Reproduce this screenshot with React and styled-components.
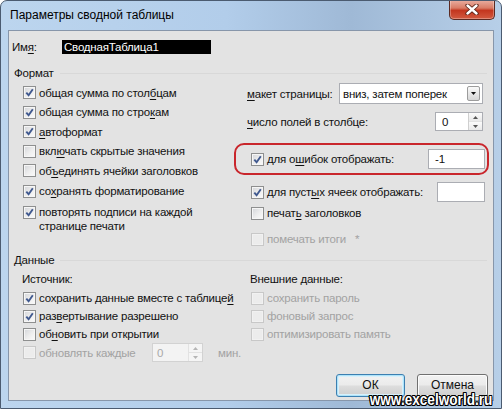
import React from 'react';
import styled, { createGlobalStyle } from 'styled-components';

const Global = createGlobalStyle`
  html, body { margin: 0; padding: 0; background: #ffffff; }
  body { font-family: "Liberation Sans", Arial, sans-serif; }
`;

const Window = styled.div`
  position: relative;
  width: 502px;
  height: 409px;
  box-sizing: border-box;
  border: 1px solid #4b5b70;
  border-radius: 7px 7px 0 0;
  background: linear-gradient(90deg, #bcd5ee 0%, #b2cdea 45%, #9fb9d6 70%, #b7cfe8 100%);
  padding: 0 7px 7px 7px;
  display: flex;
  flex-direction: column;
  overflow: hidden;
  font-family: "Liberation Sans", Arial, sans-serif;
  font-size: 11.5px;
  letter-spacing: -0.2px;
  color: #111;
  white-space: nowrap;
`;

const TitleBar = styled.div`
  height: 29px;
  display: flex;
  align-items: flex-start;
  flex: none;
`;

const Title = styled.div`
  padding-left: 2px;
  margin-top: 6px;
  line-height: 16px;
  font-size: 12px;
  letter-spacing: 0;
  color: #000;
`;

const CloseButton = styled.div`
  margin-left: auto;
  margin-top: -1px;
  margin-right: -1px;
  width: 46px;
  height: 20px;
  box-sizing: border-box;
  border: 1px solid #5b2a22;
  border-top: none;
  border-radius: 0 0 5px 5px;
  background: linear-gradient(180deg, #eab0a2 0%, #d97c66 42%, #c3361f 55%, #d25a40 100%);
  box-shadow: inset 0 0 0 1px rgba(255, 255, 255, 0.3);
  display: flex;
  align-items: center;
  justify-content: center;
`;

const Client = styled.div`
  flex: 1;
  border: 1px solid #8796aa;
  background: #e3e3e3;
  display: flex;
  flex-direction: column;
  min-height: 0;
`;

const NameRow = styled.div`
  margin-top: 7px;
  height: 18px;
  padding-left: 3px;
  display: flex;
  align-items: center;
`;

const NameLabel = styled.span`
  width: 50px;
  flex: none;
`;

const NameField = styled.div`
  width: 147px;
  height: 14px;
  line-height: 14px;
  padding-left: 2px;
  background: #000;
  color: #fff;
`;

const U = styled.span`
  text-decoration: underline;
  text-underline-offset: 2px;
`;

const SectionHeader = styled.div`
  margin-top: ${p => p.$mt || 0}px;
  height: 16px;
  line-height: 16px;
  padding-left: 5px;
  display: flex;
  align-items: center;
  gap: 6px;
  &::after {
    content: "";
    flex: 1;
    height: 1px;
    margin-right: 6px;
    background: #d8d8d8;
  }
`;

const TwoCols = styled.div`
  display: grid;
  grid-template-columns: ${p => p.$left}px 1fr;
`;

const Column = styled.div`
  display: flex;
  flex-direction: column;
  padding-left: ${p => p.$pl || 0}px;
  padding-right: ${p => p.$pr || 0}px;
  padding-top: ${p => p.$pt || 0}px;
`;

const CheckRow = styled.div`
  display: flex;
  align-items: ${p => (p.$top ? 'flex-start' : 'center')};
  height: ${p => p.$h}px;
  margin-top: ${p => p.$mt || 0}px;
  padding-left: ${p => p.$pl || 0}px;
  gap: 3px;
  color: ${p => (p.$disabled ? '#a2a2a2' : '#111')};
  line-height: 14px;
`;

const Box = styled.span`
  flex: none;
  width: 13px;
  height: 13px;
  box-sizing: border-box;
  margin-top: ${p => p.$mt || 0}px;
  border: 1px solid ${p => (p.$disabled ? '#c8c8c8' : '#8e8f8f')};
  background: ${p =>
    p.$disabled
      ? '#ececec'
      : 'linear-gradient(135deg, #d3d5d9 0%, #eeeeee 55%, #fbfbfb 100%)'};
  box-shadow: inset 0 0 0 1px ${p => (p.$disabled ? '#f1f1f1' : '#f6f6f6')};
  display: flex;
  align-items: center;
  justify-content: center;
`;

const FieldRow = styled.div`
  display: flex;
  align-items: center;
  justify-content: space-between;
  height: ${p => p.$h}px;
  margin-top: ${p => p.$mt || 0}px;
  padding-left: ${p => p.$pl || 0}px;
  color: ${p => (p.$disabled ? '#a2a2a2' : '#111')};
`;

const Highlight = styled.div`
  margin-top: 12px;
  margin-right: -6px;
  height: 32px;
  box-sizing: border-box;
  border: 2px solid #c9262c;
  border-radius: 10px;
  padding: 0 2px 0 15px;
  display: flex;
  align-items: center;
  justify-content: space-between;
`;

const LabelGroup = styled.span`
  display: flex;
  align-items: center;
  gap: 3px;
`;

const Combo = styled.div`
  width: 144px;
  height: 21px;
  box-sizing: border-box;
  border: 1px solid #abadb3;
  background: #fff;
  display: flex;
  align-items: center;
  padding-left: 3px;
`;

const DropButton = styled.span`
  margin-left: auto;
  margin-right: 2px;
  width: 13px;
  height: 15px;
  box-sizing: border-box;
  border: 1px solid #9c9c9c;
  border-radius: 2px;
  background: linear-gradient(180deg, #fafafa 0%, #e8e8e8 50%, #d6d6d6 100%);
  display: flex;
  align-items: center;
  justify-content: center;
`;

const TextBox = styled.div`
  width: ${p => p.$w}px;
  height: ${p => p.$h || 20}px;
  margin-right: ${p => p.$mr || 0}px;
  box-sizing: border-box;
  border: 1px solid ${p => (p.$disabled ? '#d2d2d2' : '#abadb3')};
  background: ${p => (p.$disabled ? '#f3f3f3' : '#fff')};
  color: ${p => (p.$disabled ? '#a9a9a9' : '#111')};
  display: flex;
  align-items: center;
  padding-left: ${p => p.$pad || 6}px;
`;

const SpinButtons = styled.span`
  margin-left: auto;
  width: 13px;
  height: 100%;
  display: flex;
  flex-direction: column;
  border-left: 1px solid ${p => (p.$disabled ? '#e2e2e2' : '#cfcfcf')};
`;

const SpinHalf = styled.span`
  flex: 1;
  display: flex;
  align-items: center;
  justify-content: center;
  background: ${p => (p.$disabled ? '#f5f5f5' : 'linear-gradient(180deg, #fbfbfb, #e9e9e9)')};
  & + & {
    border-top: 1px solid ${p => (p.$disabled ? '#e2e2e2' : '#d0d0d0')};
  }
`;

const SubHeader = styled.div`
  margin-top: 3px;
  line-height: 16px;
  height: 16px;
  padding-left: ${p => p.$pl || 0}px;
`;

const Muted = styled.span`
  margin-left: ${p => p.$ml || 0}px;
  color: #a2a2a2;
`;

const FixedLabel = styled.span`
  width: ${p => p.$w}px;
  flex: none;
`;

const ButtonRow = styled.div`
  margin-top: auto;
  padding: 0 5px 3px 0;
  display: flex;
  justify-content: flex-end;
  gap: 12px;
`;

const Button = styled.div`
  width: ${p => p.$w}px;
  height: 23px;
  box-sizing: border-box;
  border: 1px solid ${p => (p.$default ? '#3c7fb1' : '#707070')};
  border-radius: 3px;
  background: linear-gradient(180deg, #f2f2f2 0%, #ebebeb 48%, #dddddd 52%, #cfcfcf 100%);
  box-shadow: ${p =>
    p.$default ? 'inset 0 0 0 1px #aee3f9, inset 0 0 0 2px #d8f0fb' : 'inset 0 0 0 1px #fcfcfc'};
  display: flex;
  align-items: center;
  justify-content: center;
  padding-bottom: 2px;
  color: #111;
  font-size: 12px;
  letter-spacing: 0;
`;

const Watermark = styled.div`
  position: absolute;
  right: 9px;
  bottom: -1px;
  font-family: "Liberation Sans", Arial, sans-serif;
  font-weight: bold;
  font-size: 17px;
  line-height: 19px;
  letter-spacing: 0;
  color: #fff;
  transform: scaleX(0.8);
  transform-origin: right bottom;
  text-shadow:
    -1px -1px 0 #000, 1px -1px 0 #000, -1px 1px 0 #000, 1px 1px 0 #000,
    0 -1px 0 #000, 0 1px 0 #000, -1px 0 0 #000, 1px 0 0 #000;
  pointer-events: none;
`;

const Tick = () => (
  <svg width="9" height="9" viewBox="0 0 9 9">
    <path d="M1.3 4.6 L3.6 7.2 L7.8 1.3" fill="none" stroke="#40598f" strokeWidth="1.9" />
  </svg>
);

const Check = ({ checked, disabled, mt }) => (
  <Box $disabled={disabled} $mt={mt}>
    {checked && <Tick />}
  </Box>
);

const Option = ({ checked, disabled, h = 19.5, mt, pl, children }) => (
  <CheckRow $h={h} $mt={mt} $pl={pl} $disabled={disabled}>
    <Check checked={checked} disabled={disabled} />
    <span>{children}</span>
  </CheckRow>
);

const Arrow = ({ up, color = '#222' }) => (
  <svg width="5" height="3" viewBox="0 0 5 3">
    <path d={up ? 'M0 3 L2.5 0 L5 3 Z' : 'M0 0 L5 0 L2.5 3 Z'} fill={color} />
  </svg>
);

const Spinner = ({ value, w, h, disabled, pad }) => (
  <TextBox $w={w} $h={h} $disabled={disabled} $pad={pad}>
    <span>{value}</span>
    <SpinButtons $disabled={disabled}>
      <SpinHalf $disabled={disabled}><Arrow up color={disabled ? '#b5b5b5' : '#555'} /></SpinHalf>
      <SpinHalf $disabled={disabled}><Arrow color={disabled ? '#b5b5b5' : '#555'} /></SpinHalf>
    </SpinButtons>
  </TextBox>
);

export default function App() {
  return (
    <>
      <Global />
      <Window>
        <TitleBar>
          <Title>Параметры сводной таблицы</Title>
          <CloseButton>
            <svg width="14" height="11" viewBox="0 0 14 11">
              <path d="M2.5 1.5 L11.5 9.5 M11.5 1.5 L2.5 9.5" stroke="#5a2216" strokeWidth="4.2" strokeLinecap="round" />
              <path d="M2.5 1.5 L11.5 9.5 M11.5 1.5 L2.5 9.5" stroke="#ffffff" strokeWidth="2.4" strokeLinecap="round" />
            </svg>
          </CloseButton>
        </TitleBar>
        <Client>
          <NameRow>
            <NameLabel>Им<U>я</U>:</NameLabel>
            <NameField>СводнаяТаблица1</NameField>
          </NameRow>

          <SectionHeader $mt={9}>Формат</SectionHeader>
          <TwoCols $left={225}>
            <Column $pl={14} $pt={2}>
              <Option checked>общая сумма по стол<U>б</U>цам</Option>
              <Option checked>общая сумма по стро<U>к</U>ам</Option>
              <Option checked><U>а</U>втоформат</Option>
              <Option>вкл<U>ю</U>чать скрытые значения</Option>
              <Option>об<U>ъ</U>единять ячейки заголовков</Option>
              <Option checked mt={1}>со<U>х</U>ранять форматирование</Option>
              <CheckRow $h={28} $mt={4} $top>
                <Check checked mt={1} />
                <span>повторять подписи на каждой<br />странице печати</span>
              </CheckRow>
            </Column>
            <Column $pr={10}>
              <FieldRow $h={21} $mt={2} $pl={13}>
                <span><U>м</U>акет страницы:</span>
                <Combo>
                  <span>вниз, затем поперек</span>
                  <DropButton><Arrow color="#111" /></DropButton>
                </Combo>
              </FieldRow>
              <FieldRow $h={19} $mt={8} $pl={13}>
                <span><U>ч</U>исло полей в столбце:</span>
                <Spinner value="0" w={48} h={19} />
              </FieldRow>
              <Highlight>
                <LabelGroup>
                  <Check checked />
                  <span>для о<U>ш</U>ибок отображать:</span>
                </LabelGroup>
                <TextBox $w={57}>-1</TextBox>
              </Highlight>
              <FieldRow $h={20} $mt={7} $pl={17}>
                <LabelGroup>
                  <Check checked />
                  <span>для пуст<U>ы</U>х ячеек отображать:</span>
                </LabelGroup>
                <TextBox $w={48} $mr={-2} />
              </FieldRow>
              <FieldRow $h={20} $mt={1} $pl={17}>
                <LabelGroup>
                  <Check />
                  <span>печат<U>ь</U> заголовков</span>
                </LabelGroup>
              </FieldRow>
              <FieldRow $h={20} $mt={6} $pl={17} $disabled>
                <LabelGroup>
                  <Check disabled />
                  <span>помечать итоги</span>
                  <Muted $ml={6}>*</Muted>
                </LabelGroup>
              </FieldRow>
            </Column>
          </TwoCols>

          <SectionHeader $mt={3}>Данные</SectionHeader>
          <TwoCols $left={241}>
            <Column>
              <SubHeader $pl={13}>Источник:</SubHeader>
              <Option checked h={18} mt={2} pl={14}>сохранить данные вместе с таблице<U>й</U></Option>
              <Option checked h={18} pl={14}>раз<U>в</U>ертывание разрешено</Option>
              <Option h={18} pl={14}>об<U>н</U>овить при открытии</Option>
              <CheckRow $h={19} $pl={14} $disabled>
                <Check disabled />
                <FixedLabel $w={110}>обновлять каждые</FixedLabel>
                <Spinner value="0" w={51} h={19} disabled pad={4} />
                <Muted $ml={12}>мин.</Muted>
              </CheckRow>
            </Column>
            <Column>
              <SubHeader>Внешние данные:</SubHeader>
              <Option disabled h={18} mt={2} pl={1}>сохранить пароль</Option>
              <Option disabled h={18} pl={1}>фоновый запрос</Option>
              <Option disabled h={18} pl={1}>оптимизировать память</Option>
            </Column>
          </TwoCols>

          <ButtonRow>
            <Button $w={69} $default>ОК</Button>
            <Button $w={71}>Отмена</Button>
          </ButtonRow>
        </Client>
        <Watermark>www.excelworld.ru</Watermark>
      </Window>
    </>
  );
}
